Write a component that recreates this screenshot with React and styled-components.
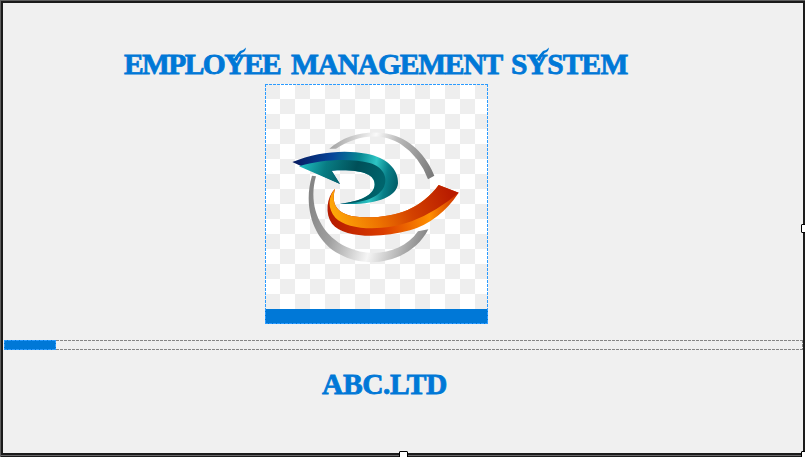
import React from "react";
import styled, { createGlobalStyle } from "styled-components";

const Global = createGlobalStyle`
  * { box-sizing: border-box; }
  body { margin: 0; overflow: hidden; background: #efefef; }
`;

const Window = styled.div`
  position: relative;
  width: 805px;
  height: 457px;
  background: #1b1b1b;
  border-top: 1px solid #606060;
  border-left: 1px solid #606060;
  padding: 2px 2px 0 2px;
  overflow: hidden;
`;

const Form = styled.main`
  height: 450px;
  background: #f0f0f0;
  display: flex;
  flex-direction: column;
`;

const FrameEdge = styled.div`
  height: 1px;
  margin: 2px 0 0 -2px;
  background: #6a686a;
`;

const Heading = styled.h1`
  display: flex;
  margin: ${(p) => p.$top}px 0 0 ${(p) => p.$left}px;
  height: 36px;
  font: bold 29.5px/36px "Liberation Serif", serif;
  color: #0078d7;
  -webkit-text-stroke: 0.8px #0078d7;
  white-space: pre;
`;

const Word = styled.span`
  flex: none;
  width: ${(p) => p.$width}px;
  letter-spacing: ${(p) => p.$spacing}px;
`;

const SwashLetter = styled.span`
  position: relative;
`;

const Swash = styled.svg`
  position: absolute;
  left: 9px;
  top: -1px;
  width: 14px;
  height: 14px;
`;

/* Dashed outline with three pixels on and one off */
const dashes = (c) => `
  background-image:
    repeating-linear-gradient(90deg, ${c} 0 3px, transparent 3px 4px),
    repeating-linear-gradient(90deg, ${c} 0 3px, transparent 3px 4px),
    repeating-linear-gradient(180deg, ${c} 0 3px, transparent 3px 4px),
    repeating-linear-gradient(180deg, ${c} 0 3px, transparent 3px 4px);
  background-size: 100% 1px, 100% 1px, 1px 100%, 1px 100%;
  background-position: 0 0, 0 100%, 0 0, 100% 0;
  background-repeat: no-repeat;
`;

const PictureBox = styled.div`
  position: relative;
  width: 223px;
  height: 240px;
  margin: 2px 0 0 262px;
  background: #0078d7;
  &::after {
    content: "";
    position: absolute;
    inset: 0;
    ${dashes("#2b9bff")}
  }
`;

const Checker = styled.div`
  height: 225px;
  background: repeating-conic-gradient(#fff 0 25%, #eee 0 50%) 0 0 / 30px 30px;
`;

const Logo = styled.svg`
  display: block;
  width: 223px;
  height: 225px;
`;

const Progress = styled.div`
  height: 10px;
  margin: 16px 0 0 1px;
  ${dashes("#858585")}
`;

const ProgressFill = styled.div`
  width: 52px;
  height: 10px;
  background-color: #0078d7;
  ${dashes("#2b9bff")}
`;

const Handle = styled.i`
  position: absolute;
  left: ${(p) => p.$x}px;
  top: ${(p) => p.$y}px;
  width: 9px;
  height: 9px;
  border: 1px solid #000;
  border-radius: 1px;
  background: #fff;
`;

function LetterY() {
  return (
    <SwashLetter>
      Y
      <Swash viewBox="0 0 14 14">
        <path d="M0 13 Q4 7 7 4 Q11 3 13 .5 Q12.500 5 8.500 6 Q6 9 4 14Z" fill="#0078d7" />
      </Swash>
    </SwashLetter>
  );
}

function CompanyLogo() {
  return (
    <Logo viewBox="15 12 669 675" preserveAspectRatio="none">
      <defs>
        <linearGradient id="ringTop" x1="210" y1="190" x2="520" y2="290" gradientUnits="userSpaceOnUse">
          <stop stopColor="#a0a0a0" /><stop offset=".38" stopColor="#fafafa" />
          <stop offset=".58" stopColor="#bbb" /><stop offset="1" stopColor="#777" />
        </linearGradient>
        <linearGradient id="ringBottom" x1="150" y1="350" x2="505" y2="450" gradientUnits="userSpaceOnUse">
          <stop stopColor="#858585" /><stop offset=".25" stopColor="#a0a0a0" />
          <stop offset=".58" stopColor="#f5f5f5" /><stop offset="1" stopColor="#858585" />
        </linearGradient>
        <linearGradient id="blueEdge" x1="100" y1="250" x2="415" y2="310" gradientUnits="userSpaceOnUse">
          <stop stopColor="#071b60" /><stop offset=".35" stopColor="#07469a" />
          <stop offset=".6" stopColor="#078892" /><stop offset=".76" stopColor="#2ec5c4" />
          <stop offset=".88" stopColor="#087f88" /><stop offset="1" stopColor="#005a65" />
        </linearGradient>
        <linearGradient id="tealFace" x1="120" y1="250" x2="360" y2="330" gradientUnits="userSpaceOnUse">
          <stop stopColor="#21c1c4" /><stop offset=".3" stopColor="#087c83" />
          <stop offset=".65" stopColor="#004f58" /><stop offset="1" stopColor="#00646c" />
        </linearGradient>
        <linearGradient id="orangeFace" x1="220" y1="430" x2="560" y2="310" gradientUnits="userSpaceOnUse">
          <stop stopColor="#ffab09" /><stop offset=".35" stopColor="#ee7400" />
          <stop offset=".65" stopColor="#d24000" /><stop offset="1" stopColor="#b91c00" />
        </linearGradient>
        <linearGradient id="orangeEdge" x1="205" y1="390" x2="595" y2="340" gradientUnits="userSpaceOnUse">
          <stop stopColor="#b61b00" /><stop offset=".4" stopColor="#db3d00" />
          <stop offset=".76" stopColor="#ff9000" /><stop offset="1" stopColor="#cc2d00" />
        </linearGradient>
      </defs>
      <path d="M208 206 C270 150 378 142 440 184 Q494 218 523 287 L504 298 Q479 230 422 192 C365 156 290 164 228 206Z" fill="url(#ringTop)" />
      <path d="M156 287 C128 380 160 482 239 523 C327 572 457 543 505 448 L474 454 C427 522 331 534 260 501 C175 460 144 371 168 289Z" fill="url(#ringBottom)" />
      <path d="M97 246 C169 216 252 208 320 221 C380 233 416 267 414 310 C411 354 339 378 239 371 C302 364 342 345 344 314 C345 282 302 267 215 272 L240 312Z" fill="url(#blueEdge)" />
      <path d="M117 259 C188 236 278 235 329 249 C369 260 385 293 372 320 C357 351 315 369 239 371 C302 364 342 345 344 314 C345 282 302 267 215 272 L240 312Z" fill="url(#tealFace)" />
      <path d="M225 326 C199 351 195 402 216 431 C252 474 359 476 450 451 Q540 423 596 338 L536 315 C483 387 406 414 312 412 C235 409 211 378 225 326Z" fill="url(#orangeEdge)" />
      <path d="M225 326 C203 351 203 386 226 413 C263 451 370 455 455 424 Q532 393 596 338 L536 315 C483 387 406 414 312 412 C235 409 211 378 225 326Z" fill="url(#orangeFace)" />
    </Logo>
  );
}

export default function App() {
  return (
    <>
      <Global />
      <Window>
        <Form>
          <Heading $top={43} $left={121}>
            <Word $width={167} $spacing={-1.6}>EMPLO<LetterY />EE</Word>
            <Word $width={220} $spacing={-1.2}>MANAGEMENT</Word>
            <Word $width={120} $spacing={-0.8}>S<LetterY />STEM</Word>
          </Heading>
          <PictureBox>
            <Checker><CompanyLogo /></Checker>
          </PictureBox>
          <Progress><ProgressFill /></Progress>
          <Heading as="h2" $top={16} $left={319}>
            <Word $width={130} $spacing={-0.4}>ABC.LTD</Word>
          </Heading>
        </Form>
        <FrameEdge />
        <Handle $x={398} $y={450} />
        <Handle $x={800} $y={223} />
        <Handle $x={800} $y={450} />
      </Window>
    </>
  );
}
